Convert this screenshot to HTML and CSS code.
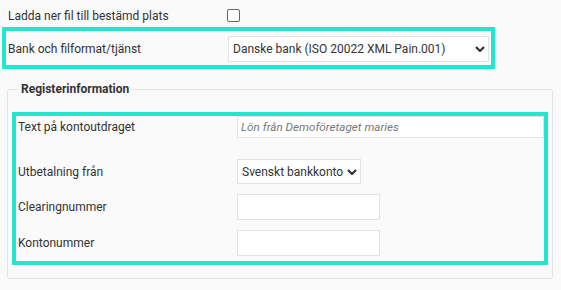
FILE: index.html
```html
<!DOCTYPE html>
<html lang="sv">
<head>
    <meta charset="UTF-8">
    <meta name="viewport" content="width=device-width, initial-scale=1.0">
    <title>Löneutbetalning - Bankfil</title>
    <link rel="stylesheet" href="styles.css">
</head>
<body>
    <div class="page">
        <div class="row row-top">
            <label class="lbl" for="download-path">Ladda ner fil till bestämd plats</label>
            <input type="checkbox" id="download-path" class="check">
        </div>

        <div class="mark mark-bank">
            <div class="row">
                <label class="lbl" for="bank-format">Bank och filformat/tjänst</label>
                <div class="select-wrap select-bank">
                    <select id="bank-format" class="ctl">
                        <option>Danske bank (ISO 20022 XML Pain.001)</option>
                    </select>
                    <svg class="chev" viewBox="0 0 10 6" width="10" height="6"><path d="M1 1 L5 5 L9 1"/></svg>
                </div>
            </div>
        </div>

        <fieldset class="group">
            <legend>Registerinformation</legend>
            <div class="mark mark-reg">
                <div class="row row-text">
                    <label class="lbl" for="statement-text">Text på kontoutdraget</label>
                    <input type="text" id="statement-text" class="ctl input-full" placeholder="Lön från Demoföretaget maries">
                </div>
                <div class="row row-from">
                    <label class="lbl" for="pay-from">Utbetalning från</label>
                    <div class="select-wrap select-small">
                        <select id="pay-from" class="ctl">
                            <option>Svenskt bankkonto</option>
                        </select>
                        <svg class="chev" viewBox="0 0 10 6" width="10" height="6"><path d="M1 1 L5 5 L9 1"/></svg>
                    </div>
                </div>
                <div class="row row-num">
                    <label class="lbl" for="clearing">Clearingnummer</label>
                    <input type="text" id="clearing" class="ctl input-short">
                </div>
                <div class="row row-num">
                    <label class="lbl" for="account">Kontonummer</label>
                    <input type="text" id="account" class="ctl input-short">
                </div>
            </div>
        </fieldset>
    </div>
</body>
</html>
```

FILE: styles.css
```css
body {
    margin: 0;
    padding: 0;
    background: #fafafa;
    font-family: 'Roboto', 'Liberation Sans', sans-serif;
    font-size: 12px;
    color: #333;
}

.page {
    padding-left: 2px;
    width: 551px;
}

.row {
    display: flex;
    align-items: center;
}

.lbl {
    flex: none;
    width: 218px;
    padding-left: 2px;
}

.row-top {
    height: 23px;
    padding-top: 4px;
    padding-left: 4px;
}

.check {
    appearance: none;
    margin: 0 0 0 1px;
    width: 13px;
    height: 13px;
    border: 1px solid #666;
    border-radius: 2px;
    background: white;
}

/* highlighted areas */
.mark {
    border: 4px solid #22e6cd;
}

.mark-bank {
    width: 483px;
    padding: 5px 2px 3px 0;
}

.mark-bank .lbl {
    width: 220px;
}

.ctl {
    box-sizing: border-box;
    border: 1px solid #e2e2e2;
    background: white;
    font-family: inherit;
    font-size: 12px;
    color: #333;
    margin: 0;
    outline: none;
}

.select-wrap {
    position: relative;
}

.select-wrap select {
    appearance: none;
    width: 100%;
    height: 100%;
    padding: 0 0 0 4px;
}

.chev {
    position: absolute;
    right: 4px;
    top: 50%;
    margin-top: -3px;
    fill: none;
    stroke: #333;
    stroke-width: 2.2;
    pointer-events: none;
}

.select-bank {
    width: 261px;
    height: 26px;
}

.select-small {
    width: 124px;
    height: 25px;
}

/* fieldset */
.group {
    margin: 13px 0 0 5px;
    width: 536px;
    padding: 16px 4px 13px 4px;
    border: 1px solid #e4e4e4;
    border-radius: 3px;
}

.group legend {
    margin-left: 6px;
    padding: 0 3px;
    font-size: 12px;
    font-weight: bold;
}

.mark-reg {
    padding: 0 0 5px 0;
}

.mark-reg .lbl {
    width: 219px;
}

.row-from {
    margin-top: 21px;
}

.row-num {
    margin-top: 10px;
}

.input-full {
    flex: 1;
    height: 22px;
    padding: 0 3px;
}

.input-full::placeholder {
    color: #777;
    font-style: italic;
    font-size: 11.7px;
}

.input-short {
    width: 143px;
    height: 26px;
    padding: 0 4px;
}
```
